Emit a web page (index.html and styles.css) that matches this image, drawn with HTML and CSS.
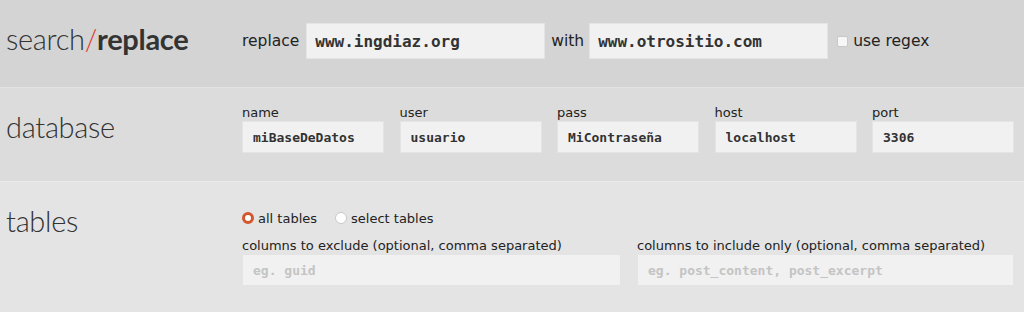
FILE: index.html
```html
<!DOCTYPE html>
<html lang="en">

<head>
    <meta charset="UTF-8">
    <title>search/replace</title>
    <link rel="stylesheet" href="styles.css">
</head>

<body>
    <div class="row row-search">
        <h1 class="heading"><span class="light">search</span><span class="slash">/</span><b>replace</b></h1>
        <div class="fields inline">
            <label for="search">replace</label>
            <input type="text" id="search" class="wide" value="www.ingdiaz.org">
            <label for="replace">with</label>
            <input type="text" id="replace" class="wide" value="www.otrositio.com">
            <label class="check"><input type="checkbox" id="regex"> use regex</label>
        </div>
    </div>

    <div class="row row-db">
        <h2 class="heading">database</h2>
        <div class="fields db-grid">
            <div class="field">
                <label for="name">name</label>
                <input type="text" id="name" value="miBaseDeDatos">
            </div>
            <div class="field">
                <label for="user">user</label>
                <input type="text" id="user" value="usuario">
            </div>
            <div class="field">
                <label for="pass">pass</label>
                <input type="text" id="pass" value="MiContraseña">
            </div>
            <div class="field">
                <label for="host">host</label>
                <input type="text" id="host" value="localhost">
            </div>
            <div class="field">
                <label for="port">port</label>
                <input type="text" id="port" value="3306">
            </div>
        </div>
    </div>

    <div class="row row-tables">
        <h2 class="heading">tables</h2>
        <div class="fields">
            <div class="radios">
                <label><span class="radio on"></span>all tables</label>
                <label><span class="radio"></span>select tables</label>
            </div>
            <div class="cols-grid">
                <div class="field">
                    <label for="exclude">columns to exclude (optional, comma separated)</label>
                    <input type="text" id="exclude" placeholder="eg. guid">
                </div>
                <div class="field">
                    <label for="include">columns to include only (optional, comma separated)</label>
                    <input type="text" id="include" placeholder="eg. post_content, post_excerpt">
                </div>
            </div>
        </div>
    </div>
</body>

</html>
```

FILE: styles.css
```css
body {
    margin: 0;
    font-family: "DejaVu Sans", sans-serif;
    color: #333;
    background-color: #e4e4e4;
}

.row {
    display: grid;
    grid-template-columns: 242px 1fr;
    padding-right: 11px;
}

.row-search {
    background-color: #d4d4d4;
    height: 87px;
    align-items: center;
    border-bottom: 1px solid #e2e2e2;
}

.row-db {
    background-color: #dcdcdc;
    height: 93px;
    border-bottom: 1px solid #e9e9e9;
}

.row-tables {
    background-color: #e4e4e4;
    height: 130px;
}

.heading {
    margin: 0;
    padding-left: 6px;
    font-family: Lato, sans-serif;
    font-weight: 300;
    font-size: 29px;
    color: #333;
    letter-spacing: -0.3px;
}

.row-search .heading {
    margin-top: -11px;
}

.heading .slash {
    color: #e0382a;
    font-weight: 300;
}

.heading b {
    font-weight: 700;
}

.row-db .heading {
    padding-top: 21px;
}

.row-tables .heading {
    padding-top: 21px;
}

label {
    font-size: 13px;
    color: #222;
}

input[type="text"] {
    box-sizing: border-box;
    border: 1px solid #e4e4e4;
    background-color: #f1f1f1;
    font-family: "DejaVu Sans Mono", monospace;
    font-weight: bold;
    font-size: 13px;
    color: #333;
    padding: 0 10px;
    height: 32px;
    width: 100%;
}

input::placeholder {
    color: #c4c4c4;
    font-weight: bold;
}

.inline {
    display: flex;
    align-items: center;
    margin-top: -5px;
}

.inline label {
    font-size: 15.5px;
}

.inline input.wide {
    width: 239px;
    height: 36px;
    font-size: 16px;
    padding: 0 8px;
    margin: 0 6px 0 7px;
}

.inline #replace {
    margin-left: 5px;
    margin-right: 9px;
}

.inline .check {
    display: flex;
    align-items: center;
}

.check input {
    appearance: none;
    margin: 0 5px 0 0;
    width: 11px;
    height: 11px;
    background-color: #f7f7f7;
    border: 1px solid #c8c8c8;
    border-radius: 2px;
}

.db-grid {
    display: grid;
    grid-template-columns: repeat(5, 142px);
    column-gap: 15.5px;
    padding-top: 17px;
}

.field label {
    display: block;
    margin-bottom: 1px;
}

.radios {
    display: flex;
    gap: 18px;
    padding-top: 28px;
    height: 20px;
    margin-bottom: 8px;
}

.radios label {
    display: flex;
    align-items: center;
    font-size: 13px;
    height: 16px;
}

.radio {
    width: 12px;
    height: 12px;
    border-radius: 50%;
    background-color: #fff;
    border: 1px solid #c9c9c9;
    margin-right: 4px;
    box-sizing: border-box;
}

.radio.on {
    border: 3px solid #d2572c;
    background-color: #fff;
}

.cols-grid {
    display: grid;
    grid-template-columns: 379px 377px;
    column-gap: 16px;
}
```
